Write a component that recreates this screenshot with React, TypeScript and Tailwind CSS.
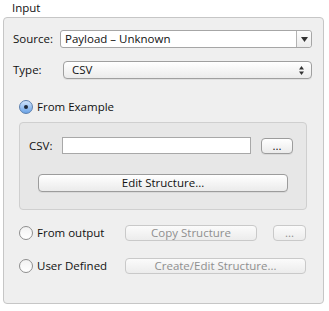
import React from 'react';

const font = { fontFamily: '"Open Sans", "DejaVu Sans", sans-serif' };

/**
 * Aqua style push button
 */
const AquaButton: React.FC<{ label: string; className?: string; disabled?: boolean }> = ({
    label,
    className = '',
    disabled = false
}) => (
    <div
        className={`flex items-center justify-center rounded-[4px] border text-[11.5px] ${
            disabled
                ? 'border-[#c9c9c9] bg-gradient-to-b from-[#fbfbfb] to-[#ececec] text-[#8f8f8f]'
                : 'border-[#9c9c9c] bg-gradient-to-b from-[#ffffff] to-[#ebebeb] text-[#111] shadow-[0_1px_0_rgba(0,0,0,0.06)]'
        } ${className}`}
    >
        {label}
    </div>
);

/**
 * Radio with label
 */
const Radio: React.FC<{ label: string; checked?: boolean }> = ({ label, checked = false }) => (
    <div className="flex items-center h-[15px]">
        {checked ? (
            <div className="w-[14px] h-[14px] rounded-full border border-[#5b7fae] bg-gradient-to-b from-[#cfe3fb] to-[#6aa3e6] flex items-center justify-center">
                <div className="w-[4px] h-[4px] rounded-full bg-[#1e2a3a]" />
            </div>
        ) : (
            <div className="w-[14px] h-[14px] rounded-full border border-[#8e8e8e] bg-gradient-to-b from-[#f2f2f2] to-[#ffffff]" />
        )}
        <span className="ml-[4px] text-[11.5px] text-[#111]">{label}</span>
    </div>
);

export default function App() {
    return (
        <div className="w-[329px] h-[311px] bg-white" style={font}>
            <div className="pl-[12px] h-[17px] text-[11.5px] leading-[15px] text-[#111]">Input</div>

            <div className="ml-[3px] w-[321px] h-[287px] rounded-[4px] border border-[#c6c6c6] bg-[#efefef] pl-[9px] pt-[12px]">
                {/* Source */}
                <div className="flex items-center h-[18px]">
                    <span className="w-[47px] text-[11.5px] text-[#111]">Source:</span>
                    <div className="flex w-[252px] h-[18px] border border-[#a6a6a6] rounded-[3px] bg-white">
                        <span className="flex-1 pl-[4px] text-[11.5px] leading-[16px] text-[#111]">Payload – Unknown</span>
                        <div className="w-[15px] border-l border-[#b3b3b3] bg-gradient-to-b from-[#fdfdfd] to-[#ececec] rounded-r-[3px] flex items-center justify-center">
                            <svg width="7" height="5" viewBox="0 0 7 5"><path d="M0 0h7L3.5 5z" fill="#333" /></svg>
                        </div>
                    </div>
                </div>

                {/* Type */}
                <div className="flex items-center h-[18px] mt-[13px]">
                    <span className="w-[50px] text-[11.5px] text-[#111]">Type:</span>
                    <div className="flex items-center w-[249px] h-[18px] border border-[#9f9f9f] rounded-[4px] bg-gradient-to-b from-[#ffffff] to-[#ebebeb] shadow-[0_1px_0_rgba(0,0,0,0.06)]">
                        <span className="flex-1 pl-[8px] text-[11.5px] text-[#111]">CSV</span>
                        <svg className="mr-[7px]" width="5" height="9" viewBox="0 0 5 9">
                            <path d="M0 3.5h5L2.5 0z" fill="#333" />
                            <path d="M0 5.5h5L2.5 9z" fill="#333" />
                        </svg>
                    </div>
                </div>

                {/* From Example */}
                <div className="mt-[20px] ml-[6px]">
                    <Radio label="From Example" checked />
                </div>

                <div className="mt-[8px] ml-[6px] w-[288px] h-[88px] rounded-[4px] border border-[#cfcfcf] bg-[#e7e7e7] pl-[9px] pt-[14px]">
                    <div className="flex items-center h-[17px]">
                        <span className="w-[33px] text-[11.5px] text-[#111]">CSV:</span>
                        <div className="w-[189px] h-[17px] border border-[#a8a8a8] bg-white" />
                        <AquaButton label="..." className="ml-[10px] w-[32px] h-[16px]" />
                    </div>
                    <AquaButton label="Edit Structure..." className="mt-[20px] ml-[9px] w-[250px] h-[18px]" />
                </div>

                {/* From output */}
                <div className="flex items-center mt-[15px] h-[16px] ml-[6px]">
                    <div className="w-[106px]">
                        <Radio label="From output" />
                    </div>
                    <AquaButton label="Copy Structure" disabled className="w-[132px] h-[16px]" />
                    <AquaButton label="..." disabled className="ml-[16px] w-[33px] h-[16px]" />
                </div>

                {/* User Defined */}
                <div className="flex items-center mt-[17px] h-[16px] ml-[6px]">
                    <div className="w-[106px]">
                        <Radio label="User Defined" />
                    </div>
                    <AquaButton label="Create/Edit Structure..." disabled className="w-[181px] h-[16px]" />
                </div>
            </div>
        </div>
    );
}
